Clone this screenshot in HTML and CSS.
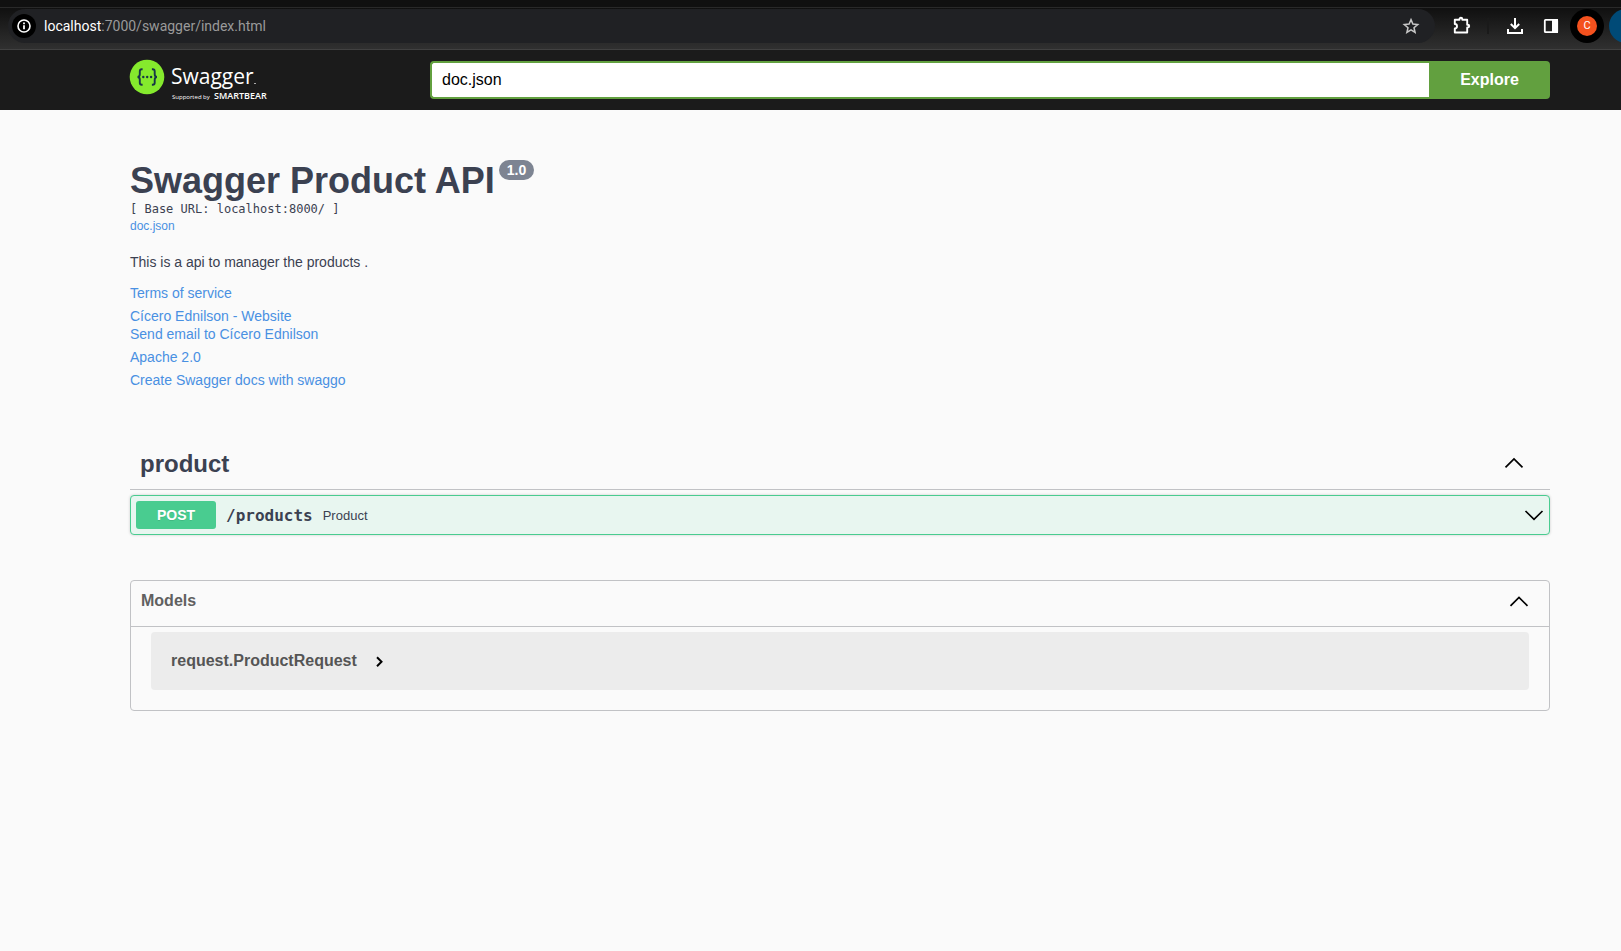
FILE: index.html
```html
<!DOCTYPE html>
<html lang="en">
<head>
<meta charset="utf-8">
<title>Swagger UI</title>
<link rel="stylesheet" href="styles.css">
</head>
<body>
<div class="browser">
  <div class="tabstrip"></div>
  <div class="toolbar">
    <div class="omnibox">
      <button class="site-info" aria-label="View site information">
        <svg width="16" height="16" viewBox="0 0 16 16"><circle cx="8" cy="8" r="6" fill="none" stroke="#fff" stroke-width="1.6"/><path d="M7.1 7.2h1.8v4H7.1zM7.1 4.6h1.8v1.7H7.1z" fill="#fff"/></svg>
      </button>
      <span class="url"><b>localhost</b>:7000/swagger/index.html</span>
      <button class="plain" aria-label="Bookmark this tab">
        <svg width="18" height="18" viewBox="0 0 18 18"><path d="M9 2.6l1.9 4.5 4.8.4-3.7 3.2 1.1 4.8L9 12.9l-4.1 2.6L6 10.7 2.3 7.5l4.8-.4z" fill="none" stroke="#c7c7c7" stroke-width="1.5"/></svg>
      </button>
    </div>
    <div class="actions">
      <button class="plain" aria-label="Extensions">
        <svg width="20" height="20" viewBox="0 0 20 20"><path d="M2.800 3.800h4.700V3.200a1.400 1.400 0 0 1 2.800 0v.6h4.900V8.700h.6a1.400 1.400 0 0 1 0 2.800h-.6v5H2.800v-4.100a2.200 2.200 0 0 0 0-4.400z" fill="none" stroke="#fff" stroke-width="1.900" stroke-linejoin="round"/></svg>
      </button>
      <span class="divider"></span>
      <button class="plain" aria-label="Downloads">
        <svg width="20" height="20" viewBox="0 0 20 20"><path d="M10 2v10M5.800 8l4.200 4.200L14.200 8M3 13v4h14v-4" fill="none" stroke="#fff" stroke-width="2"/></svg>
      </button>
      <button class="plain" aria-label="Side panel">
        <svg width="16" height="16" viewBox="0 0 16 16"><rect x="1.800" y="1.800" width="12.400" height="12.400" rx=".8" fill="none" stroke="#fff" stroke-width="1.800"/><path d="M9 1h6v14H9z" fill="#fff"/></svg>
      </button>
      <button class="profile" aria-label="Profile"><span class="avatar">C</span></button>
      <button class="update" aria-label="Update"></button>
    </div>
  </div>
</div>

<header class="topbar">
  <a class="logo" href="#" aria-label="Swagger">
    <svg width="144" height="44" viewBox="0 0 144 44">
      <circle cx="17" cy="19" r="17.300" fill="#85ea2d"/>
      <g fill="none" stroke="#173647" stroke-width="1.900"><path d="M12.600 11.300h-.8q-2 0-2 2v3q0 2.700-2.300 2.700 2.300 0 2.300 2.700v3q0 2 2 2h.8M21.900 11.300h.8q2 0 2 2v3q0 2.700 2.300 2.700-2.300 0-2.300 2.700v3q0 2-2 2h-.8"/></g>
      <g fill="#173647"><circle cx="13.300" cy="19" r="1.200"/><circle cx="17.200" cy="19" r="1.200"/><circle cx="21.100" cy="19" r="1.200"/></g>
      <text class="logo-name" x="41" y="26">Swagger</text>
      <path d="M124 25.500h2" stroke="#aaa"/>
      <text class="logo-by" x="42" y="41">Supported by</text>
      <text class="logo-brand" x="84" y="41">SMARTBEAR</text>
    </svg>
  </a>
  <form class="explore">
    <input type="text" value="doc.json" aria-label="Definition URL">
    <button type="button">Explore</button>
  </form>
</header>

<main class="page">
  <section class="info">
    <h1>Swagger Product API <span class="version">1.0</span></h1>
    <p class="base">[ Base URL: localhost:8000/ ]</p>
    <a class="spec" href="#">doc.json</a>
    <p class="description">This is a api to manager the products .</p>
    <div class="links">
      <a href="#">Terms of service</a>
      <div class="contact">
        <a href="#">Cícero Ednilson - Website</a>
        <a href="#">Send email to Cícero Ednilson</a>
      </div>
      <a href="#">Apache 2.0</a>
      <a href="#">Create Swagger docs with swaggo</a>
    </div>
  </section>

  <section class="tag">
    <h2 class="tag-head">product
      <button class="plain" aria-label="Collapse product"><svg width="20" height="20" viewBox="0 0 20 20"><path d="M1.500 13.300L10 5l8.500 8.300" class="chevron"/></svg></button>
    </h2>
    <div class="operation">
      <span class="method">POST</span>
      <span class="path">/products</span>
      <span class="summary">Product</span>
      <button class="plain" aria-label="Expand operation"><svg width="20" height="20" viewBox="0 0 20 20"><path d="M1.500 6L10 14.300 18.500 6" class="chevron"/></svg></button>
    </div>
  </section>

  <section class="models">
    <h3 class="models-head">Models
      <button class="plain" aria-label="Collapse models"><svg width="20" height="20" viewBox="0 0 20 20"><path d="M1.500 14.800L10 6.500l8.500 8.300" class="chevron"/></svg></button>
    </h3>
    <div class="model">
      <span>request.ProductRequest</span>
      <button class="plain" aria-label="Expand model"><svg width="10" height="12" viewBox="0 0 10 12"><path d="M2 2.300L6.500 6.800 2 11.300" fill="none" stroke="#000" stroke-width="2"/></svg></button>
    </div>
  </section>
</main>
</body>
</html>
```
FILE: styles.css
```css
* { box-sizing: border-box; }
body {
  margin: 0;
  background: #fafafa;
  color: #3b4151;
  font-family: "Liberation Sans", Arial, sans-serif;
  font-size: 14px;
  overflow-x: hidden;
}
h1, h2, h3, p { margin: 0; }
a { color: #4990e2; text-decoration: none; }
svg { display: block; }
button { font-family: inherit; cursor: pointer; }
.plain { padding: 0; border: 0; background: none; }
.chevron { fill: none; stroke: #000; stroke-width: 1.7; }

/* Browser bar */
.tabstrip { height: 8px; background: #101010; border-bottom: 1px solid #292929; }
.toolbar {
  display: flex;
  height: 42px;
  padding-left: 8px;
  overflow: hidden;
  background: linear-gradient(#101010, #303030);
  border-bottom: 1px solid #414141;
}
.omnibox {
  display: flex;
  align-items: center;
  flex: 1;
  height: 34px;
  margin-top: 1px;
  padding: 0 15px 0 4px;
  border-radius: 17px;
  background: #202124;
}
.site-info {
  display: grid;
  place-items: center;
  width: 24px;
  height: 24px;
  padding: 0;
  border: 0;
  border-radius: 50%;
  background: #000;
}
.url { flex: 1; margin-left: 8px; color: #9a9a9a; font: 14px Roboto, sans-serif; }
.url b { color: #fff; font-weight: 400; }
.actions {
  display: flex;
  align-items: center;
  flex: none;
  width: 186px;
  height: 34px;
  margin-top: 1px;
  padding-left: 17px;
}
.divider { flex: none; width: 2px; height: 16px; margin: 0 16px 0 15px; background: #1a1a1a; }
.actions .plain { flex: none; }
.actions .plain + .plain { margin-left: 18px; }
.profile {
  display: grid;
  place-items: center;
  flex: none;
  width: 34px;
  height: 34px;
  margin-left: 11px;
  padding: 0;
  border: 0;
  border-radius: 50%;
  background: #000;
}
.avatar {
  width: 20px;
  border-radius: 50%;
  background: #f4511e;
  color: #fff;
  font: 11px/20px Roboto, sans-serif;
}
.update {
  flex: none;
  width: 34px;
  height: 34px;
  margin-left: 5px;
  border: 0;
  border-radius: 50%;
  background: #004a77;
}

/* Swagger header */
.topbar {
  display: flex;
  align-items: center;
  height: 60px;
  padding: 0 71px 0 130px;
  background: #1b1b1b;
}
.logo { width: 300px; }
.logo svg { overflow: visible; }
.logo text { fill: #fff; font-family: "Open Sans", sans-serif; }
.logo .logo-name { font-size: 21px; }
.logo .logo-by { font-size: 6px; }
.logo .logo-brand { font-size: 9px; font-weight: 600; }
.explore { display: flex; flex: 1; height: 38px; }
.explore input {
  flex: 1;
  min-width: 0;
  padding: 0 10px;
  border: 2px solid #62a03f;
  border-right: 0;
  border-radius: 4px 0 0 4px;
  background: #fff;
  color: #000;
  font: 16px "Liberation Sans", Arial, sans-serif;
}
.explore button {
  width: 121px;
  border: 0;
  border-radius: 0 4px 4px 0;
  background: #62a03f;
  color: #fff;
  font-size: 16px;
  font-weight: 700;
}

/* API description */
.page { padding: 50px 71px 50px 130px; }
.info h1 { display: flex; align-items: flex-start; gap: 4px; font-size: 36px; line-height: 42px; }
.version {
  padding: 0 8px;
  border-radius: 20px;
  background: #7d8492;
  color: #fff;
  font-size: 14px;
  line-height: 20px;
}
.base { font: 12px/14px "DejaVu Sans Mono", monospace; }
.spec { display: block; margin-top: 2px; font-size: 12px; line-height: 16px; }
.description { margin-top: 20px; line-height: 16px; }
.links { display: flex; flex-direction: column; align-items: flex-start; gap: 5px; margin-top: 14px; line-height: 18px; }
.contact { display: flex; flex-direction: column; }

/* Operations */
.tag { margin-top: 48px; }
.tag-head {
  display: flex;
  align-items: center;
  justify-content: space-between;
  height: 53px;
  padding: 2px 26px 0 10px;
  border-bottom: 1px solid #c1c2c5;
  font-size: 24px;
}
.operation {
  display: flex;
  align-items: center;
  height: 40px;
  margin-top: 5px;
  padding: 0 5px;
  border: 1px solid #49cc90;
  border-radius: 4px;
  background: #e8f6f0;
  box-shadow: 0 0 3px rgba(0, 0, 0, .19);
}
.method {
  width: 80px;
  border-radius: 3px;
  background: #49cc90;
  color: #fff;
  font-weight: 700;
  line-height: 28px;
  text-align: center;
  text-shadow: 0 1px 0 rgba(0, 0, 0, .1);
}
.path { margin-left: 10px; font: 700 16px "DejaVu Sans Mono", monospace; }
.summary { flex: 1; margin-left: 10px; font-size: 13px; }

/* Models */
.models { margin-top: 45px; padding-bottom: 20px; border: 1px solid #c1c2c5; border-radius: 4px; }
.models-head {
  display: flex;
  align-items: center;
  justify-content: space-between;
  height: 46px;
  padding: 0 20px 6px 10px;
  border-bottom: 1px solid #c1c2c5;
  color: #606060;
  font-size: 16px;
}
.model {
  display: flex;
  align-items: center;
  gap: 18px;
  height: 58px;
  margin: 5px 20px 0;
  padding: 0 20px;
  border-radius: 4px;
  background: #ececec;
  color: #555;
  font-size: 16px;
  font-weight: 700;
}
```
